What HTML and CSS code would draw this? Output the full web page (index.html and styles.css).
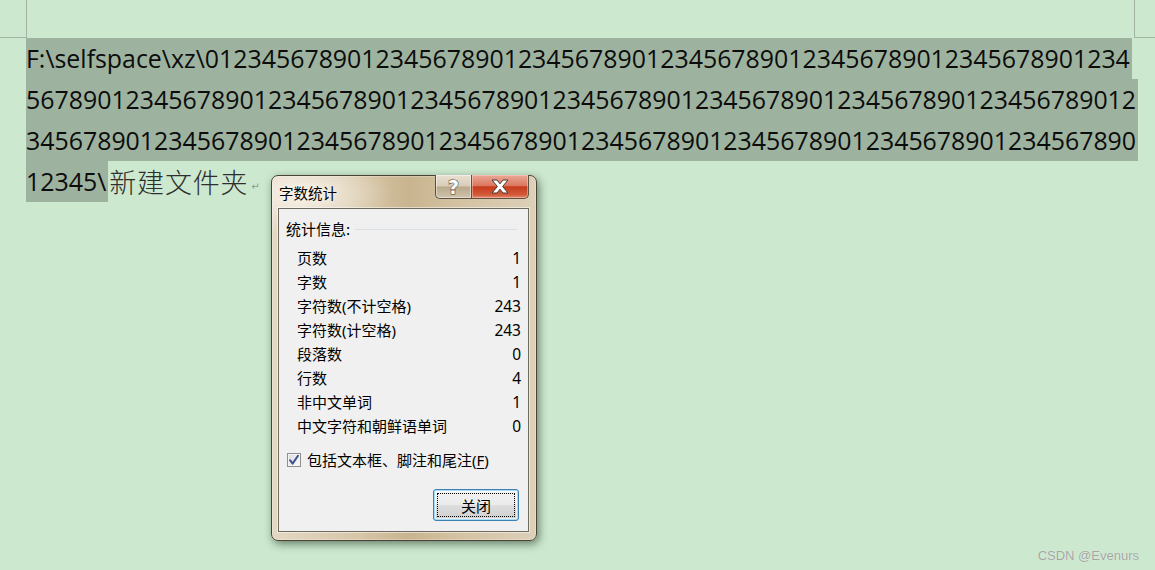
FILE: index.html
```html
<!DOCTYPE html>
<html lang="zh-CN">
<head>
<meta charset="utf-8">
<title>字数统计</title>
<link rel="stylesheet" href="styles.css">
</head>
<body>
<div class="page">
  <div class="marks">
    <div class="mark mark-l"></div>
    <div class="mark mark-r"></div>
  </div>
  <div class="doc">
    <div class="line"><span class="sel">F:\selfspace\xz\01234567890123456789012345678901234567890123456789012345678901234</span></div>
    <div class="line"><span class="sel">567890123456789012345678901234567890123456789012345678901234567890123456789012</span></div>
    <div class="line"><span class="sel">345678901234567890123456789012345678901234567890123456789012345678901234567890</span></div>
    <div class="line"><span class="sel">12345\</span><span class="cn">新建文件夹</span><span class="para">↵</span></div>
  </div>

  <div class="dialog">
    <div class="titlebar">
      <span class="title">字数统计</span>
      <div class="caption-btns">
        <div class="cbtn help"><span class="q">?</span></div>
        <div class="cbtn close">
          <svg width="20" height="15" viewBox="0 0 20 15"><path d="M2 1 H7 L10 4.8 L13 1 H18 L12.6 7.5 L18 14 H13 L10 10.2 L7 14 H2 L7.4 7.5 Z" fill="#fff" stroke="#4a3a34" stroke-width="1" stroke-linejoin="round"/></svg>
        </div>
      </div>
    </div>
    <div class="panel">
      <div class="group-head"><span>统计信息:</span><span class="rule"></span></div>
      <div class="stats">
        <div class="row"><span>页数</span><span>1</span></div>
        <div class="row"><span>字数</span><span>1</span></div>
        <div class="row"><span>字符数(不计空格)</span><span>243</span></div>
        <div class="row"><span>字符数(计空格)</span><span>243</span></div>
        <div class="row"><span>段落数</span><span>0</span></div>
        <div class="row"><span>行数</span><span>4</span></div>
        <div class="row"><span>非中文单词</span><span>1</span></div>
        <div class="row"><span>中文字符和朝鲜语单词</span><span>0</span></div>
      </div>
      <div class="check">
        <span class="box"><svg width="12" height="12" viewBox="0 0 12 12"><path d="M2 6.2 L4.6 9.6 L10 1.8" fill="none" stroke="#3d528f" stroke-width="2" stroke-linecap="round" stroke-linejoin="round"/></svg></span>
        <span>包括文本框、脚注和尾注(<u>F</u>)</span>
      </div>
      <div class="actions">
        <div class="btn"><span class="focus">关闭</span></div>
      </div>
    </div>
  </div>

  <div class="watermark">CSDN @Evenurs</div>
</div>
</body>
</html>
```

FILE: styles.css
```css
html, body {
  margin: 0;
  padding: 0;
}
body {
  background: #cce8cf;
  width: 1155px;
  height: 570px;
  overflow: hidden;
}
.page {
  position: relative;
  width: 1155px;
  height: 570px;
}
.marks {
  display: flex;
  justify-content: space-between;
  height: 38px;
}
.mark {
  box-sizing: border-box;
  height: 38px;
  border-bottom: 1px solid #a2b3a3;
}
.mark-l {
  width: 27px;
  border-right: 1px solid #a2b3a3;
}
.mark-r {
  width: 21px;
  border-left: 1px solid #a2b3a3;
}
.doc {
  padding-left: 26px;
  font-family: "Open Sans", "Noto Sans", sans-serif;
  font-size: 24.9px;
  color: #0c0c0c;
}
.line {
  height: 41px;
  line-height: 41px;
  white-space: nowrap;
  display: flex;
  align-items: stretch;
}
.sel {
  background: #9eb39f;
  display: inline-block;
  height: 41px;
  padding-right: 2px;
}
.cn {
  font-family: "Noto Sans CJK SC", sans-serif;
  font-size: 27px;
  font-weight: 300;
  color: #2e2e2e;
  letter-spacing: 0.8px;
  padding-left: 1px;
}
.para {
  font-family: "DejaVu Sans", sans-serif;
  font-size: 10px;
  color: #8c9c8c;
  padding-top: 5px;
  padding-left: 3px;
}

/* dialog */
.dialog {
  position: absolute;
  left: 271px;
  top: 175px;
  width: 266px;
  height: 366px;
  box-sizing: border-box;
  border: 1px solid #4b4336;
  border-radius: 7px;
  background:
    radial-gradient(ellipse 90px 40px at 30px 18px, rgba(250,245,236,0.9), rgba(250,245,236,0) 100%),
    linear-gradient(to right, #e4d8c4 0%, #d8c8aa 30%, #c9b48f 52%, #d4c3a3 72%, #ddd0b9 100%);
  box-shadow: 0 0 0 1px rgba(255,255,255,0.25) inset, 2px 3px 9px rgba(20,40,20,0.55);
  display: flex;
  flex-direction: column;
  font-family: "Noto Sans", "Noto Sans CJK SC", sans-serif;
  font-size: 15px;
  color: #000;
}
.titlebar {
  height: 32px;
  display: flex;
  justify-content: space-between;
  align-items: flex-start;
  padding-left: 7px;
}
.title {
  margin-top: 6px;
  line-height: 22px;
  font-family: "Noto Sans CJK SC", sans-serif;
  font-size: 14.5px;
  text-shadow: 0 0 6px rgba(255,255,255,0.9);
}
.caption-btns {
  display: flex;
  margin-right: 7px;
  margin-top: -1px;
}
.cbtn {
  height: 24px;
  box-sizing: border-box;
  border: 1px solid #5c5040;
  border-top: none;
  display: flex;
  align-items: center;
  justify-content: center;
}
.help {
  width: 36px;
  border-radius: 0 0 0 5px;
  border-right: none;
  background: linear-gradient(to bottom, #e9e0d2 0%, #d8ccb8 48%, #b9a98c 52%, #cfc3ad 100%);
  box-shadow: inset 0 0 0 1px rgba(255,255,255,0.45);
}
.q {
  font-family: "DejaVu Sans", sans-serif;
  font-weight: bold;
  font-size: 19px;
  line-height: 22px;
  color: #fff;
  -webkit-text-stroke: 1.2px #4e4a44;
  paint-order: stroke fill;
}
.close {
  width: 58px;
  border-radius: 0 0 5px 0;
  background: linear-gradient(to bottom, #e9a897 0%, #dc7a62 45%, #c63b1c 52%, #d1593a 85%, #e08a6a 100%);
  box-shadow: inset 0 0 0 1px rgba(255,220,210,0.45);
}
.close svg {
  display: block;
}

.panel {
  flex: 1;
  margin: 0 7px 8px 6px;
  border: 1px solid #6f6a60;
  background: #f0f0f0;
  display: flex;
  flex-direction: column;
  padding: 10px 8px 0 7px;
  box-shadow: 0 0 0 1px rgba(255,255,255,0.5);
}
.group-head {
  display: flex;
  align-items: center;
  height: 20px;
  line-height: 20px;
  font-family: "Noto Sans CJK SC", sans-serif;
}
.rule {
  flex: 1;
  height: 1px;
  background: #d8e0e6;
  margin: 1px 3px 0 5px;
}
.stats {
  margin-top: 7px;
  padding-left: 11px;
  padding-right: 0;
  display: flex;
  flex-direction: column;
}
.row {
  height: 24px;
  line-height: 24px;
  display: flex;
  justify-content: space-between;
  font-family: "Noto Sans", "Noto Sans CJK SC", sans-serif;
}
.row span:last-child {
  font-size: 15.5px;
  margin-right: -1px;
}
.check {
  margin-top: 12px;
  height: 20px;
  line-height: 20px;
  display: flex;
  align-items: center;
  gap: 6px;
  padding-left: 1px;
}
.box {
  width: 14px;
  height: 14px;
  box-sizing: border-box;
  border: 1px solid #8e8f8f;
  background: linear-gradient(135deg, #dcdcdc, #fbfbfb);
  box-shadow: inset 0 0 0 1px #f4f4f4;
  display: flex;
  align-items: center;
  justify-content: center;
}
.box svg {
  display: block;
}
.check u {
  text-decoration-thickness: 1px;
  text-underline-offset: 2px;
}
.actions {
  margin-top: 19px;
  display: flex;
  justify-content: flex-end;
  padding-right: 1px;
}
.btn {
  width: 86px;
  height: 32px;
  box-sizing: border-box;
  border: 1px solid #3c7fb1;
  border-radius: 3px;
  background: linear-gradient(to bottom, #f3f3f3 0%, #ebebeb 48%, #dddddd 52%, #cfcfcf 100%);
  box-shadow: inset 0 0 0 1px #a6dcf8, inset 0 0 0 2px rgba(255,255,255,0.6);
  padding: 3px;
  display: flex;
}
.focus {
  flex: 1;
  border: 1px dotted #000;
  display: flex;
  align-items: center;
  justify-content: center;
  font-family: "Noto Sans CJK SC", sans-serif;
  font-size: 15px;
  padding-top: 1px;
}

.watermark {
  position: absolute;
  right: 16px;
  bottom: 7px;
  font-family: "Liberation Sans", Arial, sans-serif;
  font-size: 13px;
  color: #a2a6a2;
  text-shadow: 0 0 1px rgba(255,255,255,0.8);
}
```
